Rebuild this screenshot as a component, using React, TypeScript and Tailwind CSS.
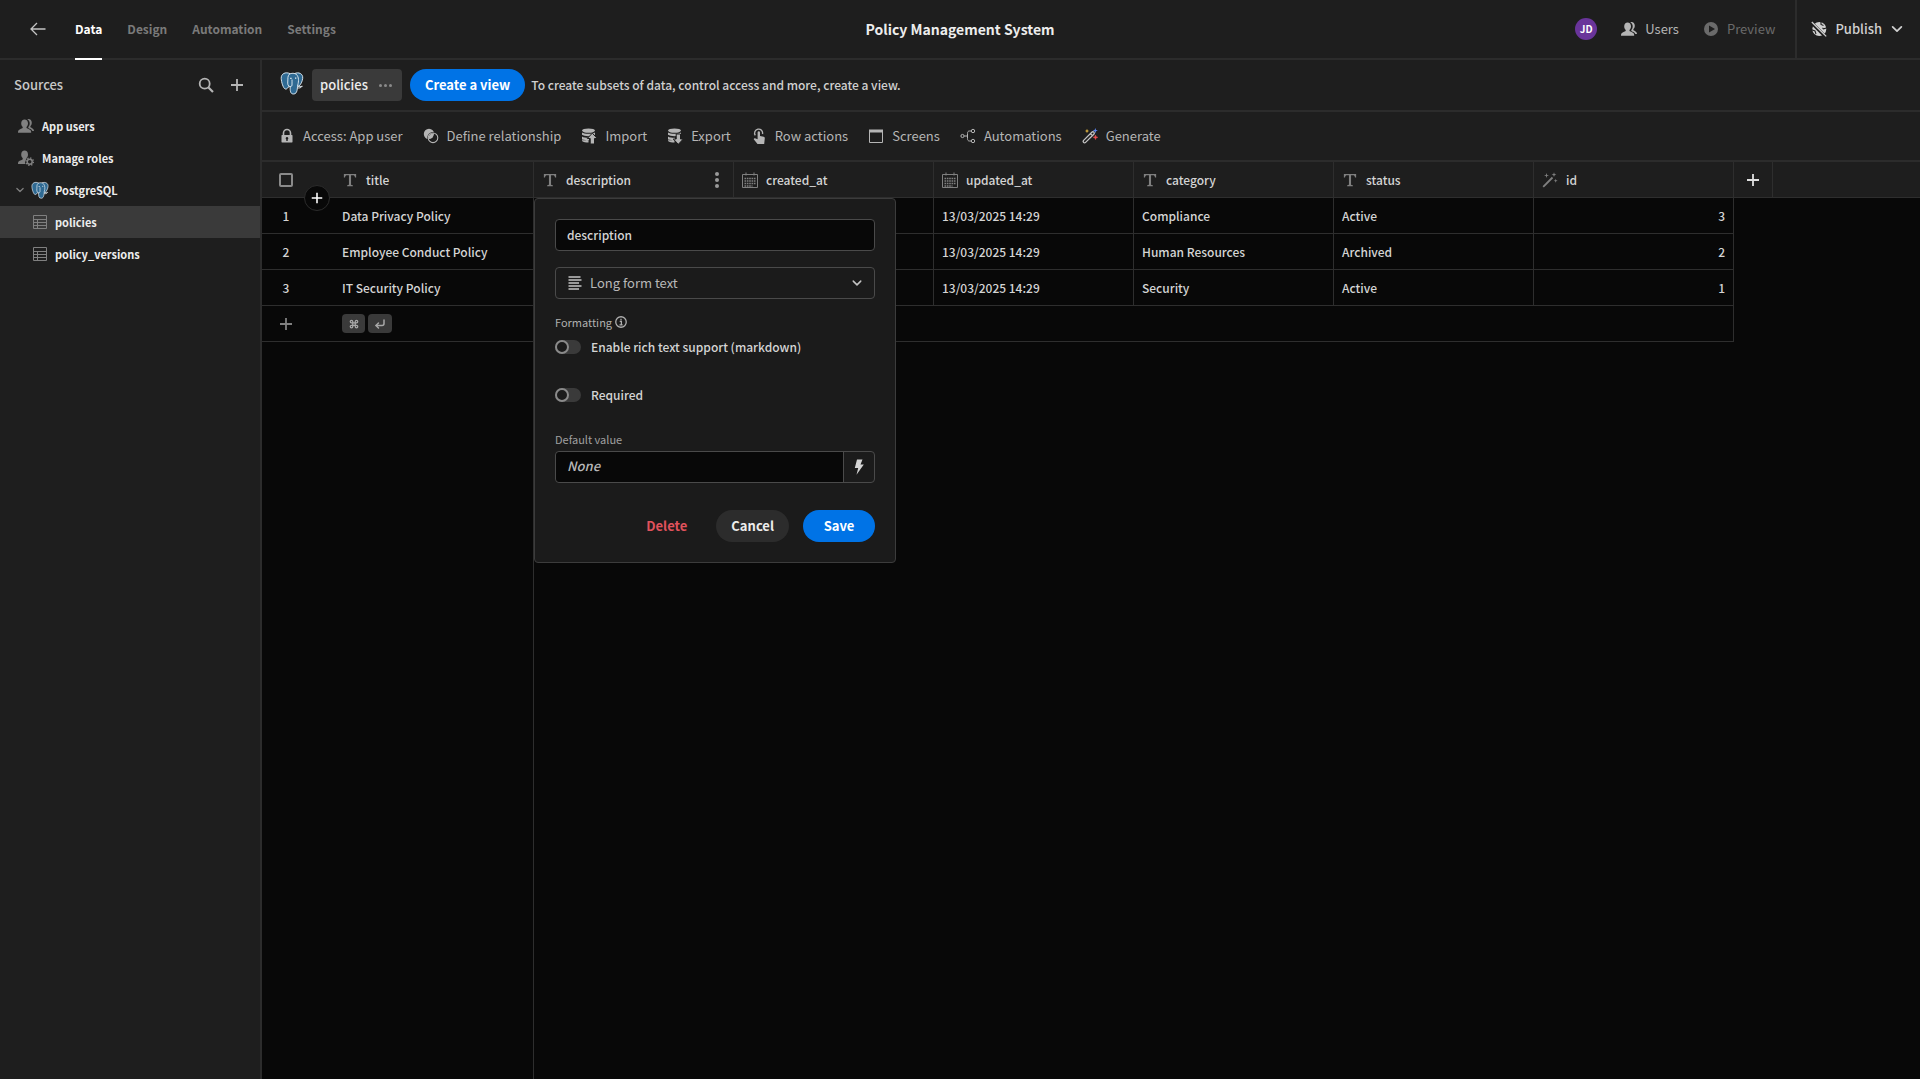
import type { ReactNode } from "react";
import { Command, CornerDownLeft } from "lucide-react";

type IconProps = { className?: string };

function Svg({ className = "size-4", children }: IconProps & { children: ReactNode }) {
  return (
    <svg viewBox="0 0 16 16" className={`${className} shrink-0`} fill="none" stroke="currentColor" aria-hidden="true">
      {children}
    </svg>
  );
}

const BackIcon = () => (
  <Svg className="size-4">
    <path d="M15.5 8H1.2M7 2 1 8l6 6" strokeWidth="1.3" />
  </Svg>
);
const UsersIcon = ({ className }: IconProps) => (
  <Svg className={className}>
    <path
      d="M6.600 1.400c2 0 3.400 1.500 3.400 3.900 0 1.600-.7 2.900-1.500 3.600v1.200c0 .4 3 1 4.100 2.200.5.6.6 1.400.6 2.400H0c0-1 .1-1.800.6-2.400 1.100-1.200 4.100-1.800 4.100-2.200V8.900C3.900 8.200 3.200 6.900 3.200 5.300c0-2.400 1.400-3.900 3.400-3.900z"
      fill="currentColor"
      stroke="none"
    />
    <path
      d="M9.300 1.200c2.400-.9 4.500.8 4.500 3.500 0 1.500-.6 2.700-1.400 3.400v1c0 .5 3.600 1.300 3.600 3.900h-1.700c-.5-1.900-3.300-2.200-4-3v-.9c.8-.9 1.400-2.200 1.400-3.800 0-1.800-.9-3.300-2.400-4.100z"
      fill="currentColor"
      stroke="none"
    />
  </Svg>
);
const UserGearIcon = ({ className }: IconProps) => (
  <Svg className={className}>
    <path
      d="M6.600.6C8.600.6 10 2.100 10 4.400c0 1.600-.7 2.900-1.500 3.600v1c-1.300 1.300-1.700 3.200-1.200 5H0c0-1 .1-1.900.6-2.500C1.700 10.300 4.700 9.700 4.700 9.200V8C3.900 7.300 3.200 6 3.200 4.400 3.200 2.100 4.600.6 6.600.6z"
      fill="currentColor"
      stroke="none"
    />
    <circle cx="11.700" cy="11.700" r="2.500" strokeWidth="1.500" />
    <circle cx="11.700" cy="11.700" r="3.700" strokeWidth="1.400" strokeDasharray="1.300 1.606" />
  </Svg>
);
const SearchIcon = () => (
  <Svg>
    <circle cx="6.700" cy="6.700" r="5" strokeWidth="1.800" />
    <path d="m10.500 10.500 4.500 4.500" strokeWidth="2.200" />
  </Svg>
);
const PlusIcon = ({ className }: IconProps) => (
  <Svg className={className}>
    <path d="M8 2v12M2 8h12" strokeWidth="1.800" />
  </Svg>
);
const ChevronIcon = ({ className }: IconProps) => (
  <Svg className={className}>
    <path d="m3 5.500 5 5 5-5" strokeWidth="2" strokeLinecap="round" strokeLinejoin="round" />
  </Svg>
);
const TableIcon = () => (
  <Svg className="size-4">
    <path d="M1.500 1.500h13v13h-13zM1.500 5.500h13M1.500 8.500h13M1.500 11.500h13M5.500 5.500v9" strokeWidth="1" />
  </Svg>
);
const TextIcon = () => (
  <Svg className="size-3.5">
    <path
      d="M1 1h14v4.200h-1.300c-.2-1.900-.9-2.600-2.700-2.600H9.200v10.200c0 .8.400 1 2 1.100V15H4.800v-1.100c1.600-.1 2-.3 2-1.100V2.600H5c-1.800 0-2.500.7-2.700 2.600H1z"
      fill="currentColor"
      stroke="none"
    />
  </Svg>
);
const CalendarIcon = () => (
  <Svg className="size-4">
    <path d="M.5 2.500h15v13H.5zM4 .5v3M12 .5v3" />
    <path d="M2.500 6.500h11M2.500 9h11M2.500 11.500h11M2.500 14h8" strokeWidth="1.600" strokeDasharray="1.600 .75" />
  </Svg>
);
const IdWandIcon = () => (
  <Svg className="size-4">
    <path d="M1.200 14.800 10.500 5.500" strokeWidth="1.800" />
    <path
      d="m4.500 1 .6 1.900L7 3.500l-1.900.6L4.500 6l-.6-1.900L2 3.500l1.900-.6zM12 .3l.6 1.800 1.800.6-1.800.6-.6 1.800-.6-1.800-1.800-.6 1.800-.6zM13.700 6.800l.5 1.500 1.500.5-1.500.5-.5 1.500-.5-1.500-1.500-.5 1.500-.5z"
      fill="currentColor"
      stroke="none"
    />
  </Svg>
);
const LockIcon = () => (
  <Svg>
    <path d="M4.500 7.500V5a3.500 3.500 0 0 1 7 0v2.500" strokeWidth="1.600" />
    <path
      d="M3 7h10c.3 0 .5.2.5.5v6.500c0 .3-.2.500-.5.500H3c-.3 0-.500-.2-.500-.500V7.500C2.500 7.200 2.700 7 3 7zm5 2a1.300 1.300 0 0 0-.7 2.400v1.600h1.400v-1.600A1.300 1.300 0 0 0 8 9z"
      fill="currentColor"
      stroke="none"
    />
  </Svg>
);
const RelationIcon = () => (
  <Svg>
    <circle cx="6" cy="6" r="5.200" fill="currentColor" stroke="none" />
    <circle cx="10" cy="9.800" r="5" fill="#1e1e1e" stroke="#1e1e1e" strokeWidth="1.600" />
    <path d="M11 5.300A5.200 5.200 0 0 1 5.500 11 5 5 0 0 1 11 5.300z" fill="currentColor" stroke="none" />
    <circle cx="10" cy="9.800" r="4.800" strokeWidth="1.100" />
  </Svg>
);
function DataIcon({ up }: { up: boolean }) {
  return (
    <Svg>
      <ellipse cx="7.500" cy="2.600" rx="6.500" ry="2.200" fill="currentColor" stroke="none" />
      <path
        d="M1 4.400c2 1.900 11 1.900 13 0v2.400C12 8.700 3 8.700 1 6.800zM1 8.400c1.500 1.200 5 1.500 7 1.400v2.500H1zM1 13c1.300 1 4 1.500 6.500 1.500v-2L1 11.500z"
        fill="currentColor"
        stroke="none"
      />
      <path
        d={up ? "m11.300 5.200 5 5.300h-2.800V16H9.200v-5.500H6.300z" : "M9.200 6h4.300v5h2.800l-5 5.300-5-5.300h2.900z"}
        fill="currentColor"
        stroke="#1e1e1e"
        strokeWidth="1"
      />
    </Svg>
  );
}
const TapIcon = () => (
  <Svg>
    <path d="M4.300 7.300A4 4 0 1 1 11.500 6" strokeWidth="1.300" />
    <path
      d="M6.600 4.400a1.200 1.200 0 0 1 2.400 0V8l3.700.8c.8.2 1.100.7 1.100 1.400L13.200 16H6.500l-3.600-4.600c-.4-.7.300-1.500 1.100-1.200l2.600 1z"
      fill="currentColor"
      stroke="none"
    />
  </Svg>
);
const ScreenIcon = () => (
  <Svg>
    <path d="M1.500 2v12.500h13V2" />
    <path d="M1 1.500h14v3H1z" fill="currentColor" stroke="none" />
  </Svg>
);
const BranchIcon = () => (
  <Svg>
    <circle cx="2.500" cy="8" r="1.600" />
    <circle cx="13" cy="3" r="1.700" />
    <circle cx="13" cy="13" r="1.700" />
    <path d="M4.200 8H7M11.200 3H9.500C8 3 7.500 4 7.500 5.500v5C7.500 12 8 13 9.500 13h1.700" />
  </Svg>
);
const GenerateIcon = () => (
  <Svg>
    <path d="m1.600 12.400 8.200-8.200c.6-.6 1.500-.6 2 0s.6 1.400 0 2L3.600 14.400c-.6.600-1.500.600-2 0s-.6-1.400 0-2zM8.500 5.800l1.800 1.800" strokeWidth="1.300" stroke="#c4c4c4" />
    <path d="m5 .8.6 1.600 1.600.6-1.600.6L5 5.200l-.6-1.600L2.800 3l1.600-.6z" fill="#f5c344" stroke="none" />
    <path d="m13.300 0 .7 1.900 1.900.7-1.900.7-.7 1.900-.7-1.900-1.900-.7 1.900-.7z" fill="#5c86f2" stroke="none" />
    <path d="m13.500 7 .6 1.700 1.700.6-1.700.6-.6 1.700-.6-1.700-1.700-.6 1.700-.6z" fill="#ee5050" stroke="#ee5050" strokeWidth=".5" />
  </Svg>
);
const PlayIcon = () => (
  <Svg>
    <path d="M8 1a7 7 0 1 0 0 14A7 7 0 0 0 8 1zM6 4.500 12 8l-6 3.500z" fill="currentColor" fillRule="evenodd" stroke="none" />
  </Svg>
);
const UnpublishedIcon = () => (
  <Svg>
    <circle cx="8.300" cy="8" r="7" fill="currentColor" stroke="none" />
    <path d="M10 .5v3l2.500 1M0 8.500l4 1.500 1 3M15.500 7l-3 .8-1-1" stroke="#1e1e1e" strokeWidth="1.100" />
    <path d="m0 1.200 15 15" stroke="#1e1e1e" strokeWidth="3.200" />
    <path d="m.8 1 14.400 14.400" strokeWidth="1.300" />
  </Svg>
);
const LinesIcon = () => (
  <Svg className="size-4">
    <path d="M1.500 2h12M1.500 5h13M1.500 8H12M1.500 11h13M1.500 14h10.500" strokeWidth="1.500" />
  </Svg>
);
const InfoIcon = () => (
  <Svg className="size-3">
    <circle cx="8" cy="8" r="7" strokeWidth="1.700" />
    <path d="M6.300 7.200h2.200v4.300M6 11.700h4.200M8 3.600v2" strokeWidth="1.700" />
  </Svg>
);
const BoltIcon = () => (
  <Svg className="size-4">
    <path d="M6 .5h5.500L9.500 5.500h3.300L5.500 15.800 7.200 9H3.800z" fill="currentColor" stroke="none" />
  </Svg>
);
const PostgresLogo = ({ className }: IconProps) => (
  <svg viewBox="0 0 24 24" className={`${className} shrink-0`} fill="#2f6a93" stroke="#e8f0f6" strokeWidth="0.9" strokeLinejoin="round" aria-hidden="true">
    <path d="M14.500 2.600c4-1.900 8.700 0 8.200 4.700-.3 3.200-2 6.200-4 8.300-1.500.8-3 .5-4.200-.6z" />
    <path d="M10 2.600C5.500.6 1 2.600 1.200 7.400c.2 3.800 2 9.800 4 10.600 1.600.6 3-1.600 4.300-3.300z" />
    <path d="M9.300 3.200c2-1.300 5.500-1.300 7.200.3 2.500 2.800 2.300 6.600 1.300 10.500-.6 3-.2 8.800-4 9-3.800.2-3.600-3.600-3.700-7.300-2.300-.6-2.600-2.600-2.300-5.700.2-2.600-.3-4.800 1.500-6.800z" />
    <path d="M10 15.700c1.700 0 2.200-1 2-2.700-.1-1.400.2-2.800 0-4.500M17.800 14.300c.9 1.800 2.700 1.500 4.500.8-1 1.700-3.300 2.300-4.800 1.700" fill="none" />
    <path d="M10.200 7.300h1.400M15 7.100h1.300" strokeWidth="1.200" />
  </svg>
);

const tabs = ["Data", "Design", "Automation", "Settings"];

function TopBar() {
  return (
    <header className="grid h-[60px] shrink-0 grid-cols-[1fr_auto_1fr] items-stretch border-b-2 border-[#2c2c2c] bg-[#1e1e1e]">
      <div className="flex items-stretch pl-[30px]">
        <button aria-label="Back" className="mr-[29px] text-[#c4c4c4]">
          <BackIcon />
        </button>
        <nav className="flex gap-[25px] text-xs font-bold">
          {tabs.map((tab, i) => (
            <a
              key={tab}
              href="#"
              className={i === 0 ? "-mb-0.5 flex items-center border-b-2 border-white text-white" : "flex items-center text-[#7a7a7a]"}
            >
              {tab}
            </a>
          ))}
        </nav>
      </div>
      <h1 className="self-center text-sm font-bold text-[#ededed]">Policy Management System</h1>
      <div className="flex items-center justify-end">
        <span className="flex size-[22px] items-center justify-center rounded-full bg-[#69349a] text-[10px] font-bold text-white">JD</span>
        <button className="ml-6 flex items-center gap-2 text-[13px] text-[#b5b5b5]">
          <UsersIcon className="size-4" />
          Users
        </button>
        <button className="ml-6 flex items-center gap-2 text-[13px] text-[#6a6a6a]">
          <PlayIcon />
          Preview
        </button>
        <button className="ml-5 flex h-full items-center gap-2 border-l-2 border-[#2c2c2c] pr-4 pl-3.5 text-[13px] font-medium text-[#d0d0d0]">
          <UnpublishedIcon />
          Publish
          <ChevronIcon className="size-3.5" />
        </button>
      </div>
    </header>
  );
}

function Sidebar() {
  const row = "flex h-8 items-center text-[11px] font-bold text-[#ededed]";
  return (
    <aside className="w-[262px] shrink-0 border-r-2 border-[#2c2c2c] bg-[#1e1e1e]">
      <div className="flex h-[50px] items-center pr-[15px] pl-3.5 text-[#b5b5b5]">
        <h2 className="flex-1 text-[13px] font-medium text-[#c8c8c8]">Sources</h2>
        <button aria-label="Search" className="mr-[15px]">
          <SearchIcon />
        </button>
        <button aria-label="Add source">
          <PlusIcon className="size-4" />
        </button>
      </div>
      <nav className="text-[#808080]">
        <a href="#" className={`${row} gap-2 pl-[18px]`}>
          <UsersIcon className="size-4 text-[#808080]" />
          App users
        </a>
        <a href="#" className={`${row} gap-2 pl-[18px]`}>
          <UserGearIcon className="size-4 text-[#808080]" />
          Manage roles
        </a>
        <a href="#" className={`${row} gap-1.5 pl-[15px]`}>
          <ChevronIcon className="size-2.5 text-[#808080]" />
          <PostgresLogo className="size-[18px]" />
          PostgreSQL
        </a>
        {["policies", "policy_versions"].map((name, i) => (
          <a key={name} href="#" className={`${row} gap-[7px] pl-8 ${i === 0 ? "bg-[#3a3a3a]" : ""}`}>
            <span className="text-[#808080]">
              <TableIcon />
            </span>
            {name}
          </a>
        ))}
      </nav>
    </aside>
  );
}

const actions: [string, ReactNode][] = [
  ["Access: App user", <LockIcon />],
  ["Define relationship", <RelationIcon />],
  ["Import", <DataIcon up />],
  ["Export", <DataIcon up={false} />],
  ["Row actions", <TapIcon />],
  ["Screens", <ScreenIcon />],
  ["Automations", <BranchIcon />],
  ["Generate", <GenerateIcon />],
];

const columns: [string, ReactNode][] = [
  ["title", <TextIcon />],
  ["description", <TextIcon />],
  ["created_at", <CalendarIcon />],
  ["updated_at", <CalendarIcon />],
  ["category", <TextIcon />],
  ["status", <TextIcon />],
  ["id", <IdWandIcon />],
];

const rows = [
  ["Data Privacy Policy", "", "13/03/2025 14:29", "13/03/2025 14:29", "Compliance", "Active", "3"],
  ["Employee Conduct Policy", "", "13/03/2025 14:29", "13/03/2025 14:29", "Human Resources", "Archived", "2"],
  ["IT Security Policy", "", "13/03/2025 14:29", "13/03/2025 14:29", "Security", "Active", "1"],
];

function Grid() {
  return (
    <table className="w-full table-fixed border-separate border-spacing-0 text-xs font-medium text-[#d4d4d4]">
      <colgroup>
        <col className="w-[72px]" />
        {columns.map(([name]) => (
          <col key={name} className="w-[200px]" />
        ))}
        <col className="w-[39px]" />
        <col />
      </colgroup>
      <thead>
        <tr className="h-9 bg-[#1e1e1e]">
          <th className="border-b border-[#2e2e2e] p-0">
            <div className="flex w-12 justify-center">
              <input type="checkbox" aria-label="Select all rows" className="size-3.5 appearance-none rounded-xs border-2 border-[#8a8a8a]" />
            </div>
          </th>
          {columns.map(([name, icon], i) => (
            <th key={name} className="border-r border-b border-[#2e2e2e] py-0 pr-2.5 pl-2 text-left font-medium">
              <div className="flex items-center">
                <span className="mr-2 flex w-4 justify-center text-[#808080]">{icon}</span>
                <span className="flex-1">{name}</span>
                {i === 1 && (
                  <button aria-label="Column options" className="flex w-3 flex-col items-center gap-0.5 text-[#9a9a9a]">
                    <span className="size-1 rounded-full bg-current" />
                    <span className="size-1 rounded-full bg-current" />
                    <span className="size-1 rounded-full bg-current" />
                  </button>
                )}
              </div>
            </th>
          ))}
          <th className="border-r border-b border-[#2e2e2e] p-0">
            <button aria-label="Add column" className="flex w-full justify-center text-[#e0e0e0]">
              <PlusIcon className="size-4" />
            </button>
          </th>
          <th className="border-b border-[#2e2e2e] p-0" />
        </tr>
      </thead>
      <tbody>
        {rows.map((cells, r) => (
          <tr key={cells[0]} className="h-9">
            <td className="border-b border-[#2e2e2e] p-0">
              <div className="w-12 text-center">{r + 1}</div>
            </td>
            {cells.map((cell, c) => (
              <td key={c} className={`border-r border-b border-[#2e2e2e] px-2 py-0 ${c === 6 ? "text-right" : ""}`}>
                {cell}
              </td>
            ))}
          </tr>
        ))}
        <tr className="h-9">
          <td className="border-b border-[#2e2e2e] p-0">
            <button aria-label="Add row" className="flex w-12 justify-center text-[#808080]">
              <PlusIcon className="size-4" />
            </button>
          </td>
          <td className="border-r border-b border-[#2e2e2e] px-2 py-0">
            <div className="flex gap-[3px] text-[#a8a8a8]">
              <kbd className="flex h-[19px] w-[23px] items-center justify-center rounded bg-[#3a3a3a]">
                <Command className="size-2.5" strokeWidth={3} />
              </kbd>
              <kbd className="flex h-[19px] w-6 items-center justify-center rounded bg-[#3a3a3a]">
                <CornerDownLeft className="size-3" strokeWidth={3} />
              </kbd>
            </div>
          </td>
          <td colSpan={6} className="border-r border-b border-[#2e2e2e] p-0" />
        </tr>
      </tbody>
    </table>
  );
}

const toggle =
  "h-3.5 w-[26px] appearance-none rounded-full bg-[#3a3a3a] before:block before:size-3.5 before:rounded-full before:border-2 before:border-[#8a8a8a] before:bg-[#1b1b1b]";

function ColumnPopover() {
  return (
    <form className="absolute top-9 left-[272px] flex w-[362px] flex-col rounded border border-[#3c3c3c] bg-[#1b1b1b] p-5 text-xs font-medium text-[#d4d4d4]">
      <input
        aria-label="Column name"
        defaultValue="description"
        className="h-8 rounded border border-[#4a4a4a] bg-[#080808] px-[11px] pb-0.5 text-xs outline-none"
      />
      <div className="relative mt-4 flex">
        <select
          aria-label="Column type"
          className="h-8 w-full appearance-none rounded border border-[#4a4a4a] bg-[#1b1b1b] pl-[34px] text-[13px] font-normal text-[#b8b8b8]"
        >
          <option>Long form text</option>
        </select>
        <span className="pointer-events-none absolute inset-x-3 inset-y-0 flex items-center justify-between text-[#c4c4c4]">
          <LinesIcon />
          <ChevronIcon className="size-3" />
        </span>
      </div>
      <div className="mt-[15px] flex h-4 items-center gap-[3px] text-[11px] font-normal text-[#b0b0b0]">
        Formatting
        <InfoIcon />
      </div>
      <label className="mt-[7px] flex h-5 items-center gap-2.5">
        <input type="checkbox" role="switch" className={toggle} />
        Enable rich text support (markdown)
      </label>
      <label className="mt-7 flex h-5 items-center gap-2.5">
        <input type="checkbox" role="switch" className={toggle} />
        Required
      </label>
      <label htmlFor="default-value" className="mt-[26px] h-4 text-[11px] leading-4 font-normal text-[#a0a0a0]">
        Default value
      </label>
      <div className="mt-1 flex h-8 rounded border border-[#4a4a4a]">
        <input
          id="default-value"
          placeholder="None"
          className="min-w-0 flex-1 rounded-l bg-[#080808] px-[11px] pb-0.5 text-[13px] italic outline-none placeholder:text-[#b8b8b8]"
        />
        <button type="button" aria-label="Insert binding" className="flex w-[31px] items-center justify-center border-l border-[#4a4a4a] text-[#d4d4d4]">
          <BoltIcon />
        </button>
      </div>
      <div className="mt-[27px] flex h-8 justify-end text-[13px] font-bold text-[#ededed]">
        <button type="button" className="px-[15px] text-[#e0525c]">
          Delete
        </button>
        <button type="button" className="ml-3.5 rounded-full bg-[#2c2c2c] px-[15px]">
          Cancel
        </button>
        <button type="button" className="ml-3.5 w-[72px] rounded-full bg-[#0073e6] text-white">
          Save
        </button>
      </div>
    </form>
  );
}

export default function App() {
  return (
    <div className="flex min-h-screen flex-col bg-[#080808] font-['Noto_Sans_CJK_SC','Noto_Sans',sans-serif] leading-5">
      <TopBar />
      <div className="flex flex-1">
        <Sidebar />
        <main className="flex min-w-0 flex-1 flex-col">
          <div className="flex h-[52px] shrink-0 items-center border-b-2 border-[#2c2c2c] bg-[#1e1e1e] pl-[18px]">
            <PostgresLogo className="mr-2 mb-1 size-6" />
            <div className="flex h-8 items-center gap-2.5 rounded bg-[#3a3a3a] px-2 text-[13px] font-medium text-[#ededed]">
              policies
              <button aria-label="Table options" className="flex w-4 justify-center gap-0.5">
                <span className="size-[3px] rounded-full bg-[#8a8a8a]" />
                <span className="size-[3px] rounded-full bg-[#8a8a8a]" />
                <span className="size-[3px] rounded-full bg-[#8a8a8a]" />
              </button>
            </div>
            <button className="ml-2 h-8 rounded-full bg-[#0073e6] px-[15px] text-[13px] font-bold text-white">Create a view</button>
            <p className="ml-1.5 text-xs font-medium text-[#d0d0d0]">To create subsets of data, control access and more, create a view.</p>
          </div>
          <div className="flex h-[50px] shrink-0 items-center gap-5 border-b-2 border-[#2c2c2c] bg-[#1e1e1e] pl-[17px] text-[13px] text-[#b5b5b5]">
            {actions.map(([label, icon]) => (
              <button key={label} className="flex items-center gap-2">
                {icon}
                {label}
              </button>
            ))}
          </div>
          <div className="relative flex-1">
            <div className="absolute inset-y-0 left-[271px] w-px bg-[#2e2e2e]" />
            <Grid />
            <button
              aria-label="Insert row"
              className="absolute top-[23px] left-[42px] flex size-[26px] items-center justify-center rounded-full border border-[#2c2c2c] bg-[#080808] text-white"
            >
              <PlusIcon className="size-3.5" />
            </button>
            <ColumnPopover />
          </div>
        </main>
      </div>
    </div>
  );
}
